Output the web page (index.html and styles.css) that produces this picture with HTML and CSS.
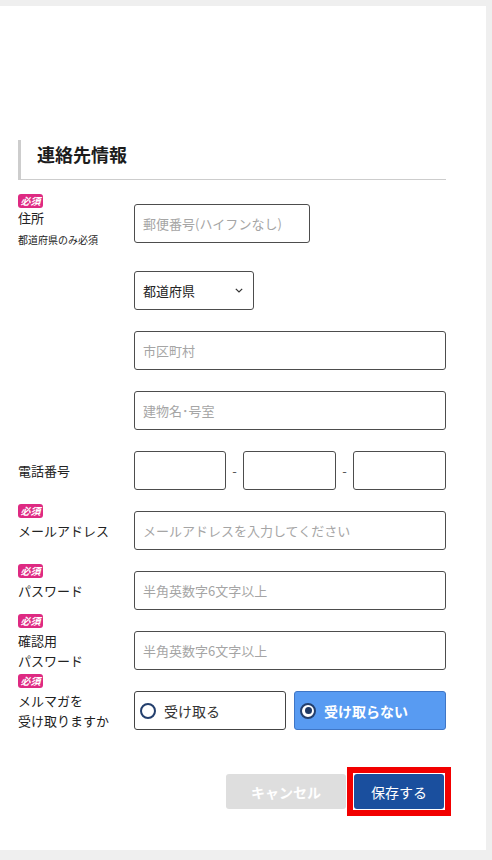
FILE: index.html
```html
<!DOCTYPE html>
<html lang="ja">
<head>
<meta charset="utf-8">
<title>連絡先情報</title>
<link rel="stylesheet" href="styles.css">
</head>
<body>
<div class="card">
  <h2 class="section-title">連絡先情報</h2>
  <div class="form">
    <div class="row row-address">
      <div class="label label-top">
        <span class="badge">必須</span>
        <span class="label-text">住所</span>
        <span class="label-note">都道府県のみ必須</span>
      </div>
      <div class="fields">
        <div class="input input-zip"><span class="ph">郵便番号(ハイフンなし)</span></div>
        <div class="select">
          <span>都道府県</span>
          <svg class="chev" width="8" height="5" viewBox="0 0 8 5"><path d="M0.8 0.8l3.2 3.2 3.2-3.2" fill="none" stroke="#333" stroke-width="1.2"/></svg>
        </div>
        <div class="input"><span class="ph">市区町村</span></div>
        <div class="input"><span class="ph">建物名･号室</span></div>
      </div>
    </div>
    <div class="row">
      <div class="label"><span class="label-text">電話番号</span></div>
      <div class="tel">
        <div class="input"></div><span class="dash">-</span><div class="input"></div><span class="dash">-</span><div class="input"></div>
      </div>
    </div>
    <div class="row">
      <div class="label"><span class="badge badge-up">必須</span><span class="label-text">メールアドレス</span></div>
      <div class="input"><span class="ph">メールアドレスを入力してください</span></div>
    </div>
    <div class="row">
      <div class="label"><span class="badge badge-up">必須</span><span class="label-text">パスワード</span></div>
      <div class="input"><span class="ph">半角英数字6文字以上</span></div>
    </div>
    <div class="row">
      <div class="label"><span class="badge badge-up">必須</span><span class="label-text">確認用<br>パスワード</span></div>
      <div class="input"><span class="ph">半角英数字6文字以上</span></div>
    </div>
    <div class="row">
      <div class="label"><span class="badge badge-up">必須</span><span class="label-text">メルマガを<br>受け取りますか</span></div>
      <div class="radios">
        <div class="radio"><span class="circle"></span><span>受け取る</span></div>
        <div class="radio radio-on"><span class="circle"></span><span>受け取らない</span></div>
      </div>
    </div>
  </div>
  <div class="actions">
    <button class="btn btn-cancel">キャンセル</button>
    <div class="highlight"><button class="btn btn-save">保存する</button></div>
  </div>
</div>
</body>
</html>
```

FILE: styles.css
```css
html, body {
  margin: 0;
  padding: 0;
  background: #efefef;
}
body {
  font-family: "Noto Sans CJK JP", "Noto Sans", sans-serif;
  color: #222;
  padding-top: 6px;
}
.card {
  background: #fff;
  width: 486px;
  height: 844px;
  box-sizing: border-box;
  padding: 134px 40px 0 18px;
}
.section-title {
  margin: 0;
  height: 39px;
  border-left: 3px solid #cdcdcd;
  border-bottom: 1px solid #cdcdcd;
  padding-left: 16px;
  font-size: 18px;
  font-weight: 700;
  line-height: 28px;
  color: #1c1c1c;
}
.form {
  margin-top: 24px;
  display: flex;
  flex-direction: column;
  gap: 21px;
}
.row {
  display: grid;
  grid-template-columns: 116px 312px;
  grid-auto-rows: 39px;
  align-items: center;
}
.row-address {
  grid-auto-rows: auto;
}
.label {
  display: flex;
  flex-direction: column;
  align-items: flex-start;
}
.label-top {
  align-self: start;
  margin-top: -10px;
}
.label-text {
  font-size: 13px;
  line-height: 20px;
  color: #222;
  white-space: nowrap;
}
.label-note {
  font-size: 10px;
  line-height: 18px;
  margin-top: 3px;
  color: #222;
}
.badge {
  display: inline-block;
  width: 25px;
  height: 14px;
  border-radius: 3px;
  background: #de2a82;
  color: #fff;
  font-size: 10px;
  font-weight: 700;
  font-style: italic;
  line-height: 14px;
  text-align: center;
}
.badge-up {
  margin-top: -17px;
  margin-bottom: 3px;
}
.fields {
  display: flex;
  flex-direction: column;
  gap: 21px;
}
.input, .select {
  box-sizing: border-box;
  height: 39px;
  border: 1px solid #4d4d4d;
  border-radius: 3px;
  background: #fff;
  padding-left: 8px;
  display: flex;
  align-items: center;
  font-size: 13px;
}
.ph {
  color: #a5a5a5;
}
.input-zip {
  width: 176px;
}
.select {
  width: 120px;
  margin-top: 7px;
  justify-content: space-between;
  padding-right: 10px;
  color: #222;
}
.chev {
  display: block;
}
.tel {
  display: grid;
  grid-template-columns: 92px 17px 93px 17px 93px;
  align-items: center;
}
.dash {
  text-align: center;
  color: #555;
  font-size: 13px;
}
.radios {
  display: grid;
  grid-template-columns: 152px 152px;
  gap: 8px;
}
.radio {
  box-sizing: border-box;
  height: 39px;
  border: 1px solid #444;
  border-radius: 3px;
  background: #fff;
  display: flex;
  align-items: center;
  gap: 8px;
  padding-left: 5px;
  font-size: 14px;
  color: #333;
}
.circle {
  box-sizing: border-box;
  width: 16px;
  height: 16px;
  border-radius: 50%;
  border: 2px solid #233f6d;
  background: #fff;
  display: flex;
  align-items: center;
  justify-content: center;
}
.radio-on {
  background: #589bf2;
  border-color: #3f76c6;
  color: #fff;
  font-weight: 700;
}
.radio-on .circle::after {
  content: "";
  width: 7px;
  height: 7px;
  border-radius: 50%;
  background: #1f3a66;
}
.actions {
  margin-top: 37px;
  margin-right: -5px;
  display: flex;
  justify-content: flex-end;
  align-items: center;
  gap: 1px;
}
.highlight {
  border: 6px solid #f20000;
  padding: 1px;
  background: #fff;
  display: flex;
}
.btn {
  height: 35px;
  border: none;
  border-radius: 3px;
  font-family: "Noto Sans CJK JP", "Noto Sans", sans-serif;
  font-size: 14px;
  color: #fff;
  cursor: pointer;
  padding: 0;
}
.btn-cancel {
  width: 120px;
  background: #dedede;
  font-weight: 700;
}
.btn-save {
  width: 90px;
  background: #1a4f9e;
}
```
